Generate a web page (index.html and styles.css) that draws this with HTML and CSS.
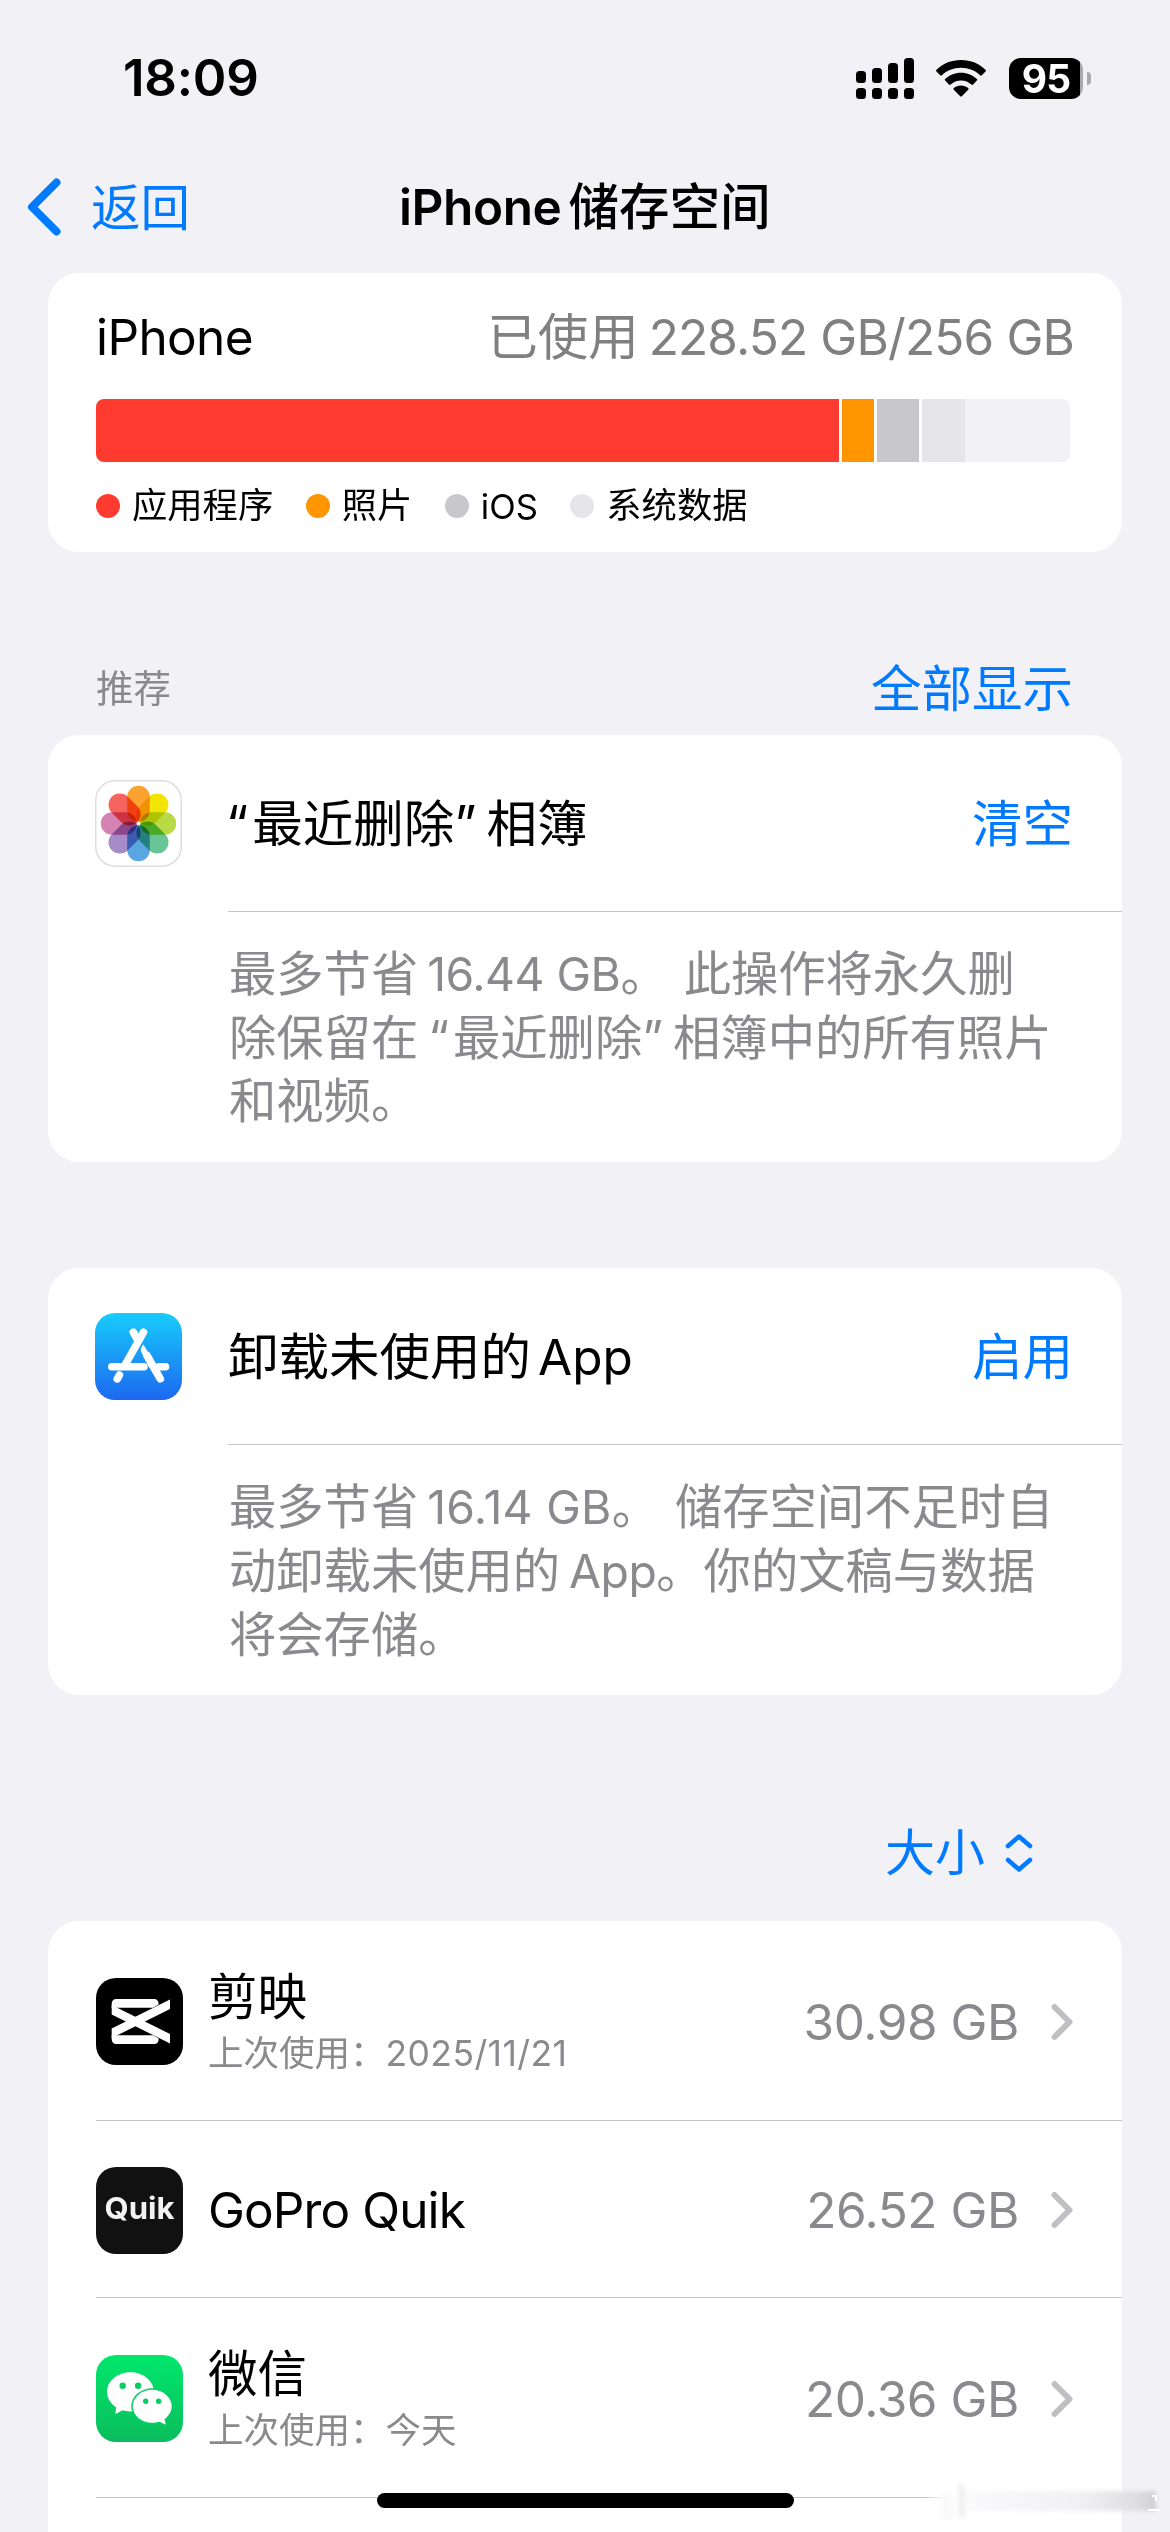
FILE: index.html
```html
<!DOCTYPE html>
<html lang="zh-CN">
<head>
<meta charset="utf-8">
<title>iPhone储存空间</title>
<link rel="stylesheet" href="styles.css">
</head>
<body>
<div class="screen">
  <header class="status">
    <div class="time">18:09</div>
    <div class="indicators">
      <svg class="signal" width="58" height="41" viewBox="0 0 58 41">
        <rect x="0" y="13" width="10" height="12" rx="3.5"/><rect x="16" y="10" width="10" height="15" rx="3.5"/><rect x="32" y="5" width="10" height="20" rx="3.5"/><rect x="48" y="0" width="10" height="25" rx="3.5"/>
        <rect x="0" y="30" width="10" height="11" rx="3.5"/><rect x="16" y="30" width="10" height="11" rx="3.5"/><rect x="32" y="30" width="10" height="11" rx="3.5"/><rect x="48" y="30" width="10" height="11" rx="3.5"/>
      </svg>
      <svg class="wifi" width="50" height="37" viewBox="0 0 50 37">
        <path d="M25 0C15.300 0 6.500 3.700 .5 9.800Q-.3 10.700 .5 11.500L4.200 15.300Q5 16.100 5.900 15.200C10.800 10.500 17.500 7.700 25 7.700S39.200 10.500 44.100 15.200Q45 16.100 45.800 15.300L49.500 11.500Q50.300 10.700 49.500 9.800C43.500 3.700 34.700 0 25 0Z"/>
        <path d="M25 12.700C18.800 12.700 13.200 15.100 9.100 19Q8.300 19.800 9.100 20.600L12.900 24.500Q13.700 25.300 14.600 24.500C17.300 22 21 20.400 25 20.400S32.700 22 35.400 24.500Q36.300 25.300 37.100 24.500L40.900 20.600Q41.700 19.800 40.900 19C36.800 15.100 31.200 12.700 25 12.700Z"/>
        <path d="M25 25.400C22.200 25.400 19.700 26.400 17.800 28.100Q16.900 28.900 17.800 29.700L24.200 36.200Q25 37 25.800 36.200L32.200 29.700Q33.100 28.900 32.200 28.100C30.300 26.400 27.800 25.400 25 25.400Z"/>
      </svg>
      <div class="battery"><span class="battery-body">95</span><span class="battery-tip"></span></div>
    </div>
  </header>

  <nav class="nav">
    <a class="back">
      <svg width="34" height="58" viewBox="0 0 34 58"><path d="M29.500 4.500L5 29L29.500 53.500"/></svg>
      <span>返回</span>
    </a>
    <h1 class="title"><span class="lat">iPhone</span>储存空间</h1>
  </nav>

  <main class="content">
    <section class="card storage">
      <div class="storage-head">
        <span class="lat device">iPhone</span>
        <span class="used">已使用<span class="lat">228.52 GB/256 GB</span></span>
      </div>
      <div class="bar">
        <i class="apps" style="width:743px"></i><i class="photos" style="width:32px"></i><i class="ios" style="width:42px"></i><i class="system" style="width:43px"></i><i class="free"></i>
      </div>
      <ul class="legend">
        <li><i class="apps"></i>应用程序</li>
        <li><i class="photos"></i>照片</li>
        <li><i class="ios"></i><span class="lat">iOS</span></li>
        <li><i class="system"></i>系统数据</li>
      </ul>
    </section>

    <div class="section-head">
      <h2>推荐</h2>
      <a class="link">全部显示</a>
    </div>

    <section class="card tip">
      <div class="tip-head">
        <svg class="app-icon" viewBox="0 0 87 87">
          <rect x=".75" y=".75" width="85.500" height="85.500" rx="19.500" fill="#fff" stroke="#dedede" stroke-width="1.500"/>
          <g class="petals">
            <rect x="32.200" y="5.800" width="22.600" height="36" rx="11.300" fill="#fba22f"/>
            <rect x="32.200" y="5.800" width="22.600" height="36" rx="11.300" fill="#f3e408" transform="rotate(45 43.500 43.500)"/>
            <rect x="32.200" y="5.800" width="22.600" height="36" rx="11.300" fill="#b9da45" transform="rotate(90 43.500 43.500)"/>
            <rect x="32.200" y="5.800" width="22.600" height="36" rx="11.300" fill="#68c595" transform="rotate(135 43.500 43.500)"/>
            <rect x="32.200" y="5.800" width="22.600" height="36" rx="11.300" fill="#59a6e3" transform="rotate(180 43.500 43.500)"/>
            <rect x="32.200" y="5.800" width="22.600" height="36" rx="11.300" fill="#a58bc8" transform="rotate(225 43.500 43.500)"/>
            <rect x="32.200" y="5.800" width="22.600" height="36" rx="11.300" fill="#d582b4" transform="rotate(270 43.500 43.500)"/>
            <rect x="32.200" y="5.800" width="22.600" height="36" rx="11.300" fill="#f5645f" transform="rotate(315 43.500 43.500)"/>
          </g>
        </svg>
        <h3 class="quoted"><span class="open">“</span>最近删除”<span class="gap"></span>相簿</h3>
        <a class="link">清空</a>
      </div>
      <p class="tip-text">最多节省<span class="lat">16.44 GB</span>。<span class="wide"></span>此操作将永久删<br>除保留在<span class="gap"></span><span class="open">“</span>最近删除”<span class="gap"></span>相簿中的所有照片<br>和视频。</p>
    </section>

    <section class="card tip">
      <div class="tip-head">
        <svg class="app-icon" viewBox="0 0 87 87">
          <defs><linearGradient id="store" x2="0" y2="1"><stop stop-color="#18ccfb"/><stop offset="1" stop-color="#1c68f0"/></linearGradient></defs>
          <rect width="87" height="87" rx="20" fill="url(#store)"/>
          <g fill="none" stroke="#fff" stroke-width="7.600" stroke-linecap="round">
            <path d="M48.500 19.200L29.500 53"/>
            <path d="M38.300 19.200L43 27.500"/>
            <path d="M16.800 53.700H49"/>
            <path d="M64 53.700H70.500"/>
            <path d="M24.400 62L22.300 65.800"/>
            <path d="M52 42.500L65.300 65.800"/>
          </g>
          <path fill="#fff" d="M48.300 31.500Q44.500 36 46.500 39.500L54.500 55H62L50.500 35Z"/>
        </svg>
        <h3>卸载未使用的<span class="lat">App</span></h3>
        <a class="link">启用</a>
      </div>
      <p class="tip-text">最多节省<span class="lat loose">16.14 GB</span>。<span class="wide"></span>储存空间不足时自<br>动卸载未使用的<span class="lat">App</span>。你的文稿与数据<br>将会存储。</p>
    </section>

    <div class="sort">
      <a class="link">大小</a>
      <svg width="28" height="40" viewBox="0 0 28 40"><path d="M3 13L14 3.500L25 13M3 27L14 36.500L25 27"/></svg>
    </div>

    <section class="card apps-list">
      <div class="row">
        <svg class="app-icon" viewBox="0 0 87 87">
          <rect width="87" height="87" rx="20"/>
          <g fill="#fff">
            <path d="M15.700 26.900L74 56V65.500L15.700 36.400Z"/>
            <path d="M15.700 60.100L74 31V21.500L15.700 50.600Z"/>
            <path d="M15.700 30V25.500A4.500 4.500 0 0 1 20.200 21H58Q62.700 21 62.700 26.500L57 29.700H21Z"/>
            <path d="M15.700 57V61.500A4.500 4.500 0 0 0 20.200 66H58Q62.700 66 62.700 60.500L57 57.300H21Z"/>
          </g>
        </svg>
        <div class="names"><strong>剪映</strong><small>上次使用：<span class="date">2025/11/21</span></small></div>
        <span class="size">30.98 GB</span>
        <svg class="chev" width="22" height="38" viewBox="0 0 22 38"><path d="M3.500 4L18.500 19L3.500 34"/></svg>
      </div>
      <div class="row short">
        <svg class="app-icon" viewBox="0 0 87 87">
          <rect width="87" height="87" rx="20" fill="#111"/>
          <text class="quik" x="8.500" y="51.500" textLength="70" lengthAdjust="spacingAndGlyphs">Quik</text>
        </svg>
        <div class="names"><strong class="latin-name">GoPro Quik</strong></div>
        <span class="size">26.52 GB</span>
        <svg class="chev" width="22" height="38" viewBox="0 0 22 38"><path d="M3.500 4L18.500 19L3.500 34"/></svg>
      </div>
      <div class="row">
        <svg class="app-icon" viewBox="0 0 87 87">
          <defs><linearGradient id="chat" x2="0" y2="1"><stop stop-color="#00e76d"/><stop offset="1" stop-color="#0abd5c"/></linearGradient></defs>
          <rect width="87" height="87" rx="20" fill="url(#chat)"/>
          <ellipse cx="34.400" cy="36.800" rx="23.400" ry="19.600" fill="#fff"/>
          <path d="M20.500 50L19.400 59L28 54.500Z" fill="#fff"/>
          <ellipse cx="56.200" cy="51.300" rx="21" ry="18" fill="#05d064"/>
          <ellipse cx="56.200" cy="51.300" rx="19.500" ry="16.500" fill="#fff"/>
          <path d="M68 62L69.800 69.800L62 66Z" fill="#fff"/>
          <g fill="#08cd62"><circle cx="26.700" cy="30.700" r="3.200"/><circle cx="42.100" cy="30.700" r="3.200"/><circle cx="49.700" cy="46.300" r="2.700"/><circle cx="62.700" cy="46.300" r="2.700"/></g>
        </svg>
        <div class="names"><strong>微信</strong><small>上次使用：今天</small></div>
        <span class="size">20.36 GB</span>
        <svg class="chev" width="22" height="38" viewBox="0 0 22 38"><path d="M3.500 4L18.500 19L3.500 34"/></svg>
      </div>
    </section>
  </main>

  <svg class="smudge" width="250" height="50" viewBox="0 0 250 50">
    <defs>
      <linearGradient id="fade"><stop stop-color="#fff" stop-opacity="0"/><stop offset="1" stop-color="#fff"/></linearGradient>
      <linearGradient id="trail"><stop stop-color="#fafafb"/><stop offset=".6" stop-color="#f1f1f4"/><stop offset=".9" stop-color="#dedee2"/><stop offset="1" stop-color="#cfcfd4"/></linearGradient>
      <filter id="soft" x="-10%" y="-40%" width="120%" height="180%"><feGaussianBlur stdDeviation="2"/></filter>
    </defs>
    <rect x="4" y="12" width="24" height="8" fill="url(#fade)"/>
    <rect x="28" y="12" width="174" height="8" fill="#fff"/>
    <g filter="url(#soft)">
      <rect x="20" y="14" width="13" height="26" fill="#f9f9fa"/>
      <rect x="38" y="4" width="7" height="34" fill="#f1f1f2"/>
      <rect x="46" y="11" width="190" height="20" fill="url(#trail)"/>
    </g>
    <path d="M232 16H236V21M228 30H240" fill="none" stroke="#fff" stroke-width="2"/>
  </svg>
  <div class="home"></div>
</div>
</body>
</html>
```
FILE: styles.css
```css
* { box-sizing: border-box; margin: 0; padding: 0; }
body {
  background: #f2f1f6;
  font-family: Inter, "Noto Sans CJK SC", sans-serif;
  color: #000;
}
.screen {
  position: relative;
  width: 1170px;
  height: 2532px;
  overflow: hidden;
  background: #f2f1f6;
  font-size: 50.5px;
  line-height: 60px;
}
h1, h2, h3, strong, small, i { font-weight: 400; font-style: normal; font-size: inherit; }
svg { display: block; flex: none; }
.lat { font-size: .98em; }
.link { color: #007aff; }
.card { background: #fff; border-radius: 31px; overflow: hidden; }

/* Status bar */
.status {
  height: 141px;
  padding: 15px 79px 0 123px;
  display: flex;
  align-items: center;
  justify-content: space-between;
}
.time { font-size: 51px; font-weight: 600; letter-spacing: -.2px; }
.indicators { display: flex; align-items: center; }
.wifi { margin: 0 23px 0 22px; }
.battery { display: flex; align-items: center; gap: 4px; }
.battery-body {
  width: 74px;
  height: 41px;
  border-radius: 12px;
  background: linear-gradient(90deg, #000 71px, #a9a9ac 71px);
  color: #fff;
  font-size: 39px;
  font-weight: 700;
  line-height: 41px;
  text-align: center;
  letter-spacing: -1px;
}
.battery-tip { width: 4px; height: 13px; border-radius: 0 5px 5px 0; background: #a9a9ac; }

/* Navigation */
.nav {
  height: 132px;
  padding-left: 27px;
  display: grid;
  grid-template-columns: 372px auto 1fr;
  align-items: center;
}
.back { display: flex; align-items: center; gap: 30px; color: #007aff; font-size: 49.500px; }
.back span { padding-top: 2px; }
.back path { fill: none; stroke: #007aff; stroke-width: 8; stroke-linecap: round; stroke-linejoin: round; }
.title { font-weight: 500; white-space: nowrap; }
.title .lat { margin-right: 7px; font-weight: 600; letter-spacing: -.4px; }

.content { padding: 0 48px; display: flex; flex-direction: column; }

/* Storage summary */
.storage { height: 279px; padding: 34px 48px 0; }
.storage-head { display: flex; justify-content: space-between; }
.device { letter-spacing: -.6px; }
.used { color: #808080; white-space: nowrap; }
.used .lat { margin-left: 10px; letter-spacing: -.85px; }
.bar {
  height: 63px;
  width: 974px;
  margin-top: 32px;
  display: flex;
  gap: 3px;
  border-radius: 8px;
  overflow: hidden;
}
.bar .system { margin-right: -3px; }
.bar .free { flex: 1; background: #f2f1f6; }
.apps { background: #ff3b30; }
.photos { background: #ff9500; }
.ios { background: #c7c7cc; }
.system { background: #e5e5ea; }
.legend {
  display: flex;
  gap: 32.5px;
  margin-top: 22px;
  list-style: none;
  font-size: 35.3px;
  line-height: 44px;
}
.legend li { display: flex; align-items: center; gap: 12px; }
.legend i { width: 24px; height: 24px; border-radius: 50%; }

/* Recommendations */
.section-head {
  height: 183px;
  padding: 90px 49px 0 48px;
  display: flex;
  justify-content: space-between;
  align-items: center;
}
.section-head h2 { font-size: 37.500px; color: #8a8a8e; }
.tip { height: 427px; }
.tip + .tip { margin-top: 106px; }
.tip-head {
  height: 177px;
  padding: 0 49px 0 47px;
  display: flex;
  align-items: center;
  background: linear-gradient(#c6c6c8, #c6c6c8) 180px 176px / 100% 1px no-repeat;
}
.tip-head h3 { flex: 1; margin-left: 46px; white-space: nowrap; }
.tip-head h3.quoted { margin-left: 44px; }
.tip-head h3 .lat { margin-left: 7px; }
.app-icon { width: 87px; height: 87px; }
.petals { isolation: isolate; }
.petals rect { mix-blend-mode: multiply; }
.open { margin-right: 4px; }
.gap { display: inline-block; width: 10px; }
.wide { display: inline-block; width: 16px; }
.tip-text {
  padding: 30px 0 0 181px;
  font-size: 47.300px;
  line-height: 63px;
  color: #8a8a8e;
  white-space: nowrap;
}
.tip-text .lat { margin-left: 9px; letter-spacing: -.5px; }
.tip-text .loose { letter-spacing: .3px; }

/* Sort control */
.sort {
  height: 226px;
  padding: 89px 89px 0 0;
  display: flex;
  justify-content: flex-end;
  align-items: center;
  gap: 20px;
  font-size: 50px;
}
.sort path { fill: none; stroke: #007aff; stroke-width: 4.500; stroke-linecap: round; stroke-linejoin: round; }

/* App list */
.apps-list { height: 680px; border-radius: 31px 31px 0 0; }
.row {
  height: 200px;
  margin-left: 48px;
  padding: 2px 49px 0 0;
  display: flex;
  align-items: center;
  border-bottom: 1px solid #c6c6c8;
}
.row.short { height: 177px; }
.names { flex: 1; margin-left: 25px; display: flex; flex-direction: column; }
.names strong { font-size: 49.500px; }
.names .latin-name { letter-spacing: -.9px; }
.names small { font-size: 35.500px; line-height: 44px; color: #8a8a8e; margin-top: 5px; }
.date { letter-spacing: .4px; }
.size { color: #8a8a8e; font-size: 49.500px; letter-spacing: -.45px; margin-right: 32px; }
.chev path { fill: none; stroke: #c0c0c2; stroke-width: 6; stroke-linecap: round; stroke-linejoin: round; }
.quik { fill: #f2f2f2; font: 700 30px Inter, sans-serif; }

.smudge { position: absolute; left: 920px; top: 2480px; }
.home {
  position: absolute;
  left: 377px;
  top: 2493px;
  width: 417px;
  height: 15px;
  border-radius: 8px;
  background: #000;
}
```
